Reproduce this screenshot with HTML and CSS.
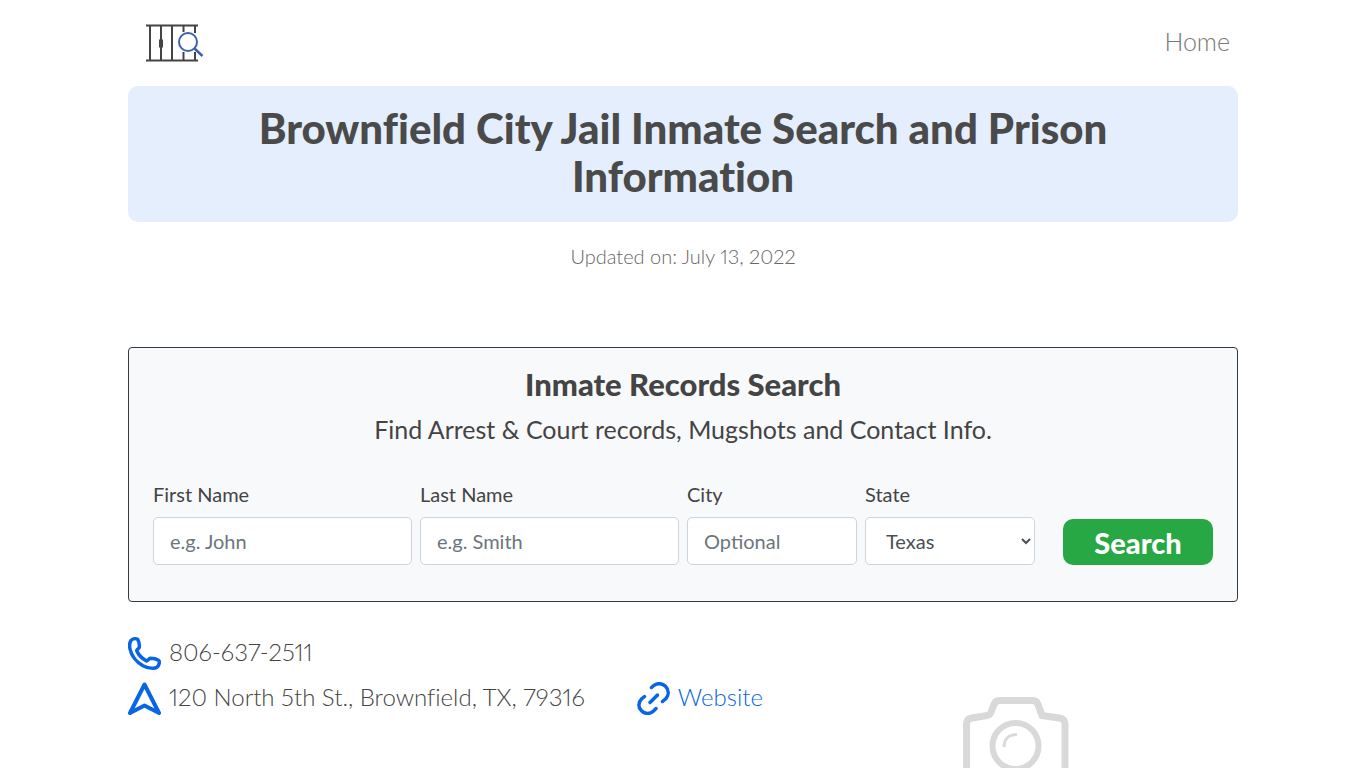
FILE: index.html
```html
<!DOCTYPE html>
<html lang="en">
<head>
    <meta charset="UTF-8">
    <meta name="viewport" content="width=device-width, initial-scale=1.0">
    <title>Brownfield City Jail Inmate Search and Prison Information</title>
    <link rel="stylesheet" href="styles.css">
</head>
<body>
    <div class="container">
        <!-- Navigation -->
        <header class="navbar">
            <a href="/" class="logo" aria-label="Inmate search home">
                <svg width="58" height="38" viewBox="0 0 58 38" fill="none">
                    <path d="M0 1.500h52M0 36.500h52" stroke="#444" stroke-width="2"/>
                    <path d="M4 1v36M15 1v36M26 1v36M37.500 1v7M37.500 28v9M49 1v8M49 28v9" stroke="#444" stroke-width="2"/>
                    <path d="M15 15.500v8" stroke="#444" stroke-width="4"/>
                    <circle cx="42" cy="18" r="9" stroke="#3c62ac" stroke-width="2"/>
                    <path d="M48.500 24.500l8 7.500" stroke="#3c62ac" stroke-width="2.500"/>
                </svg>
            </a>
            <nav>
                <a href="/" class="nav-link">Home</a>
            </nav>
        </header>

        <h1 class="page-title">Brownfield City Jail Inmate Search and Prison Information</h1>
        <p class="updated">Updated on: July 13, 2022</p>

        <!-- Search Form -->
        <section class="search-box">
            <h2>Inmate Records Search</h2>
            <p class="search-intro">Find Arrest &amp; Court records, Mugshots and Contact Info.</p>
            <form class="search-form" action="/search" method="get">
                <div class="field wide">
                    <label for="firstName">First Name</label>
                    <input type="text" id="firstName" name="first_name" placeholder="e.g. John">
                </div>
                <div class="field wide">
                    <label for="lastName">Last Name</label>
                    <input type="text" id="lastName" name="last_name" placeholder="e.g. Smith">
                </div>
                <div class="field">
                    <label for="city">City</label>
                    <input type="text" id="city" name="city" placeholder="Optional">
                </div>
                <div class="field">
                    <label for="state">State</label>
                    <select id="state" name="state">
                        <option>Texas</option>
                    </select>
                </div>
                <button type="submit">Search</button>
            </form>
        </section>

        <!-- Contact Details -->
        <section class="details">
            <div class="contact">
                <div class="contact-item">
                    <svg class="icon" viewBox="0 0 33 33" fill="none" stroke="#0866e4" stroke-width="3.500" stroke-linejoin="round">
                        <path d="M3 3.500C5 1.500 8 1.300 9.800 2.500C11.200 5 11.500 8 11.300 10.500C10.500 12 8.800 12.500 8.700 13.500C10.500 18 14 21.500 18.500 24C20 24 20.500 21.500 22.500 21.300C25 21.300 28.500 22 30.800 23.500C32 25 31 28.500 29 30.300C26.500 32 20 31.300 15 28.800C8.500 25 3.500 19 2 12C1.300 8.500 1.500 5.500 3 3.500Z"/>
                    </svg>
                    <span>806-637-2511</span>
                </div>
                <div class="contact-item">
                    <svg class="icon" viewBox="0 0 33 33" fill="none" stroke="#0866e4" stroke-width="4" stroke-linejoin="round">
                        <path d="M16.500 2.500L31 31L16.500 23.500L2 31Z"/>
                    </svg>
                    <span>120 North 5th St., Brownfield, TX, 79316</span>
                </div>
                <a href="#" class="contact-item">
                    <svg class="icon" viewBox="0 0 33 33" fill="none" stroke="#0866e4" stroke-width="3.500" stroke-linecap="round">
                        <path d="M14.500 5.500L17 3.300C20.500 .8 25.500 1.200 28.500 4.300C32 8 32 13 29 16.500L25.500 19.500"/>
                        <path d="M7.500 14.500L4.500 17C1 20.500 1 25.500 4.500 28.800C8 32.300 13 32.300 16.500 29L19 26.500"/>
                        <path d="M13 20.500L20.500 13"/>
                    </svg>
                    <span>Website</span>
                </a>
            </div>
            <div class="photo">
                <svg width="106" height="96" viewBox="0 0 106 96" fill="none" stroke="#d9d9d9">
                    <path d="M3.500 86V27C3.500 23 6 21.500 9 21L24 18.500C26.500 18.500 27 17.500 28 15L31 7.500C32 4.500 34 3.500 36.500 3.500H69.500C72 3.500 74 4.500 75 7.500L79 18.500L96 21C99.500 21.500 102 23 102 27V86C102 90 100 92 96 92H10C6 92 3.500 90 3.500 86Z" stroke-width="7"/>
                    <circle cx="52.500" cy="49" r="23" stroke-width="6"/>
                    <path d="M41 50C41 42 46 37.500 54 37.500" stroke-width="3"/>
                </svg>
            </div>
        </section>
    </div>
</body>
</html>
```
FILE: styles.css
```css
/* General Styles */
* {
    box-sizing: border-box;
}

body {
    margin: 0;
    font-family: Lato, "Open Sans", sans-serif;
    font-size: 24px;
    font-weight: 300;
    font-variant-ligatures: none;
    font-variant-numeric: proportional-nums;
    line-height: 36px;
    color: #444;
    background-color: #fff;
}

.container {
    max-width: 1140px;
    margin: 0 auto;
    padding: 0 15px;
}

h1, h2, p {
    margin: 0;
    text-align: center;
}

a {
    color: #0866e4;
    text-decoration: none;
}

svg {
    display: block;
}

/* Navigation */
.navbar {
    display: flex;
    align-items: center;
    justify-content: space-between;
    height: 86px;
    padding: 0 8px 0 18px;
}

nav {
    padding-bottom: 4px;
}

.nav-link {
    font-size: 25px;
    color: #777;
}

.page-title {
    padding: 18px 20px 22px;
    font-size: 42px;
    font-weight: 900;
    line-height: 48px;
    color: #4a4a4a;
    background-color: #e4eefd;
    border-radius: 10px;
}

.updated {
    margin: 19px 0 76px;
    font-size: 20px;
    line-height: 30px;
    color: #666;
}

/* Search Form */
.search-box {
    padding: 18px 24px 36px;
    background-color: #f8f9fb;
    border: 1px solid #343a40;
    border-radius: 4px;
}

h2 {
    font-size: 31px;
    font-weight: 900;
    line-height: 36px;
}

.search-intro {
    margin: 9px 0 33px;
    font-size: 25px;
    font-weight: 400;
}

.search-form {
    display: grid;
    grid-template-columns: repeat(12, 1fr);
    gap: 8px;
    align-items: end;
}

.field {
    grid-column: span 2;
}

.field.wide {
    grid-column: span 3;
}

label {
    display: block;
    margin-bottom: 9px;
    font-size: 20px;
    font-weight: 400;
    line-height: 28px;
}

input, select {
    width: 100%;
    height: 48px;
    padding: 0 16px;
    font-family: inherit;
    font-size: 20px;
    color: #495057;
    background-color: #fff;
    border: 1px solid #ced4da;
    border-radius: 5px;
}

input::placeholder {
    color: #6c757d;
}

button {
    grid-column: span 2;
    height: 46px;
    margin-left: 20px;
    padding: 0;
    font-family: inherit;
    font-size: 29px;
    font-weight: 900;
    color: #fff;
    background-color: #28a745;
    border: none;
    border-radius: 10px;
    cursor: pointer;
}

/* Contact Details */
.details {
    display: grid;
    grid-template-columns: 7fr 5fr;
    margin: 33px -15px 0;
}

.contact {
    display: flex;
    flex-wrap: wrap;
    align-content: flex-start;
    justify-content: space-between;
    gap: 9px 24px;
    padding: 0 15px;
}

.contact-item {
    display: flex;
    align-items: center;
    gap: 8px;
}

.contact-item:first-child {
    width: 100%;
}

.contact-item span {
    padding-bottom: 3px;
    line-height: 33px;
}

.icon {
    width: 33px;
    height: 33px;
}

.photo {
    display: flex;
    justify-content: center;
    padding-top: 62px;
}
```
